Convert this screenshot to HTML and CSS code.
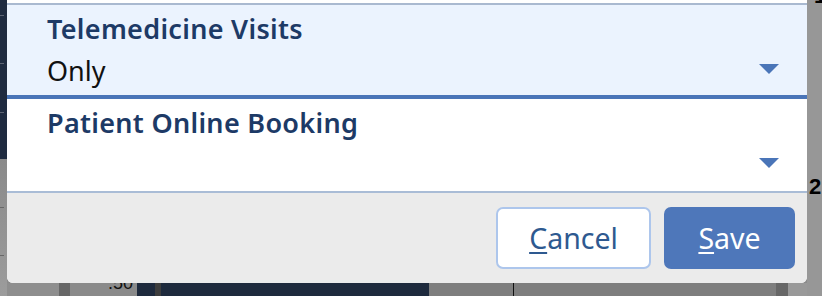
FILE: index.html
```html
<!DOCTYPE html>
<html lang="en">
<head>
<meta charset="utf-8">
<title>Booking settings</title>
<link rel="stylesheet" href="styles.css">
</head>
<body>
  <div class="rail-left"></div>
  <div class="rail-right">
    <span class="num num-1">1</span>
    <span class="num num-2">2</span>
  </div>
  <div class="rail-bottom"><span class="axis-label">.50</span></div>

  <div class="dialog" role="dialog">
    <div class="field field-active">
      <div class="field-label">Telemedicine Visits</div>
      <div class="field-value">
        <span class="value-text">Only</span>
        <svg class="caret" width="20" height="10" viewBox="0 0 20 10" aria-hidden="true"><polygon points="0,0 20,0 10,10"/></svg>
      </div>
    </div>
    <div class="field field-plain">
      <div class="field-label">Patient Online Booking</div>
      <div class="field-value">
        <span class="value-text"></span>
        <svg class="caret" width="20" height="10" viewBox="0 0 20 10" aria-hidden="true"><polygon points="0,0 20,0 10,10"/></svg>
      </div>
    </div>
    <div class="footer">
      <button class="btn btn-secondary"><u>C</u>ancel</button>
      <button class="btn btn-primary"><u>S</u>ave</button>
    </div>
  </div>
</body>
</html>
```

FILE: styles.css
```css
html, body {
  margin: 0;
  padding: 0;
}

body {
  width: 822px;
  height: 296px;
  overflow: hidden;
  display: grid;
  grid-template-columns: 7px 800px 15px;
  grid-template-rows: 283px 13px;
  background: #8b8b8b;
  font-family: "Noto Sans", "Open Sans", sans-serif;
}

/* ---- backdrop of the underlying app ---- */
.rail-left {
  grid-column: 1;
  grid-row: 1 / 3;
  background:
    linear-gradient(#5d6473, #5d6473) 0 15px / 4px 1px no-repeat,
    linear-gradient(#5d6473, #5d6473) 0 63px / 4px 1px no-repeat,
    linear-gradient(#5d6473, #5d6473) 0 112px / 4px 1px no-repeat,
    linear-gradient(#686868, #686868) 0 207px / 4px 1px no-repeat,
    linear-gradient(#686868, #686868) 0 255px / 4px 1px no-repeat,
    linear-gradient(to bottom, #1f2b40 0, #1f2b40 159px, #8a8a8a 159px, #9c9c9c 100%);
}

.rail-right {
  grid-column: 3;
  grid-row: 1 / 3;
  background: #979797;
  overflow: hidden;
  display: flex;
  flex-direction: column;
  align-items: flex-start;
}

.num {
  font-family: "Liberation Sans", Arial, sans-serif;
  font-weight: 700;
  font-size: 22px;
  line-height: 22px;
  color: #000;
}

.num-1 {
  margin-top: -15px;
  padding-left: 7px;
}

.num-2 {
  margin-top: 169px;
  padding-left: 2px;
}

.rail-bottom {
  grid-column: 2;
  grid-row: 2;
  overflow: hidden;
  background: linear-gradient(to right,
    #8e8e8e 0, #8e8e8e 52px,
    #676767 52px, #676767 63px,
    #8a8a8a 63px, #8a8a8a 130px,
    #1e2a3d 130px, #1e2a3d 148px,
    #3d3d3d 148px, #3d3d3d 154px,
    #1e2a3d 154px, #1e2a3d 422px,
    #7e7e7e 422px, #7e7e7e 506px,
    #111 506px, #111 507px,
    #7e7e7e 507px, #7e7e7e 769px,
    #676767 769px, #676767 781px,
    #999 781px, #999 100%);
}

.axis-label {
  display: block;
  margin-top: -9px;
  padding-left: 101px;
  font-family: "Liberation Sans", Arial, sans-serif;
  font-size: 18px;
  line-height: 18px;
  color: #111;
}

/* ---- dialog ---- */
.dialog {
  grid-column: 2;
  grid-row: 1;
  display: flex;
  flex-direction: column;
  background: #fff;
  padding-top: 3px;
  border-radius: 0 0 6px 6px;
  overflow: hidden;
  box-sizing: border-box;
  height: 283px;
}

.field {
  box-sizing: border-box;
  padding: 9px 28px 0 40px;
}

.field-active {
  background: #ebf3fe;
  border-top: 2px solid #a9b9d0;
  border-bottom: 4px solid #4a75b8;
  height: 96px;
}

.field-plain {
  background: #fff;
  border-bottom: 2px solid #a9bcd6;
  height: 94px;
}

.field-label {
  font-size: 27px;
  line-height: 30px;
  font-weight: 600;
  letter-spacing: 0.3px;
  color: #1d3a66;
  white-space: nowrap;
}

.field-value {
  margin-top: 12px;
  height: 30px;
  display: flex;
  align-items: center;
  justify-content: space-between;
}

.value-text {
  font-size: 27px;
  line-height: 30px;
  color: #111;
}

.caret {
  fill: #4a75b8;
  margin-bottom: 4px;
}

.footer {
  flex: 1;
  background: #ebebeb;
  display: flex;
  justify-content: flex-end;
  align-items: center;
  gap: 13px;
  padding: 0 12px;
}

.btn {
  box-sizing: border-box;
  height: 62px;
  border-radius: 7px;
  font-family: "Noto Sans", "Open Sans", sans-serif;
  font-size: 28.5px;
  line-height: 1;
  padding: 0;
  cursor: pointer;
}

.btn u {
  text-decoration-thickness: 2px;
  text-underline-offset: 3px;
}

.btn-secondary {
  width: 155px;
  background: #fff;
  border: 2px solid #adc6ec;
  color: #2e5990;
}

.btn-primary {
  width: 131px;
  background: #4e77ba;
  border: none;
  color: #fff;
}
```
